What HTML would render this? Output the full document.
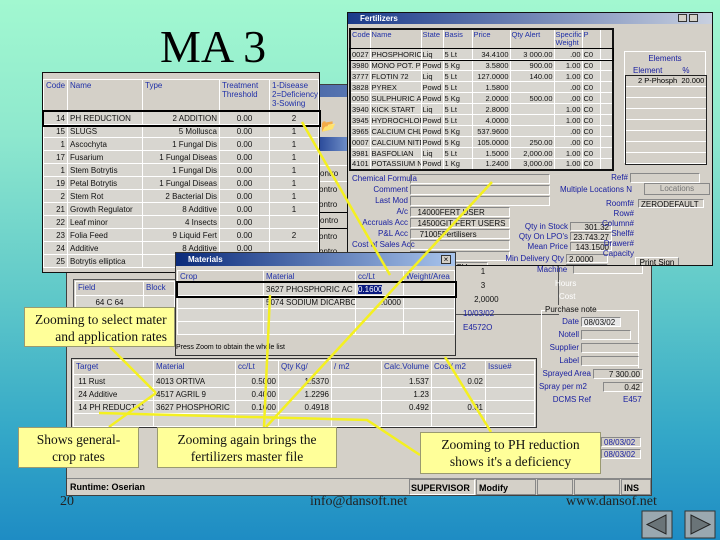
<!DOCTYPE html>
<html><head><meta charset="utf-8"><style>
*{margin:0;padding:0;box-sizing:border-box}
body{width:720px;height:540px;overflow:hidden;position:relative;font-family:"Liberation Sans",sans-serif;
background:linear-gradient(180deg,#a2f8d0 0%,#8ee8ce 25%,#5fc8c9 55%,#34a8c8 80%,#1e8cc4 100%)}
.a{position:absolute}
.win{position:absolute;background:#d4d0c8;border:1px solid #404040}
.tb{position:absolute;background:linear-gradient(90deg,#0a2a7a,#a8c4ec);color:#fff;font-size:8px;font-weight:bold;padding-left:12px;line-height:11px}
.g{position:absolute;border-collapse:collapse;font-size:8px;color:#111;table-layout:fixed}
.g td{border:1px solid #fff;background:#d8d6d0;height:13px;padding:0 2px;white-space:nowrap;overflow:hidden}
.g th{border:1px solid #fff;background:#d4d0c8;color:#2030a8;font-weight:normal;text-align:left;vertical-align:top;padding:1px 2px;font-size:8px;overflow:hidden;white-space:nowrap}
.g2 td{height:11px;line-height:9px;font-size:7.5px;padding:0 1px}
.g2 th{font-size:7.5px;line-height:8px;padding:1px}
.r{text-align:right}.c{text-align:center}
.lbl{position:absolute;color:#1a20a0;font-size:8px;text-align:right;white-space:nowrap}
.fld{position:absolute;border-bottom:1px solid #fff;border-right:1px solid #fff;border-top:1px solid #888;border-left:1px solid #888;font-size:8px;color:#111;white-space:nowrap;overflow:hidden;line-height:9px;padding:0 2px}
.co{position:absolute;background:#ffff99;border:1px solid #9a9a70;font-family:"Liberation Serif",serif;font-size:13.5px;text-align:center;line-height:17px;color:#111;padding-top:3px;overflow:hidden;white-space:nowrap}
</style></head><body>

<div class="a" style="left:160px;top:20px;font-family:'Liberation Serif',serif;font-size:46px;color:#000">MA 3</div>

<!-- main window -->
<div class="win" style="left:66px;top:84px;width:586px;height:412px">
  <div class="tb" style="left:0;top:0;width:584px;height:12px"></div>
  <div class="a" style="left:252px;top:52px;width:40px;height:14px;background:linear-gradient(90deg,#2a4a9a,#8aa8d8)"></div>
  <div class="a" style="left:252px;top:80px;width:30px;height:90px;font-size:8px;line-height:15px;color:#111">
    <div style="border:1px solid #fff">ontro</div><div>ontro</div><div>ontro</div><div style="border:1px solid #000">ontro</div><div>ontro</div><div>ontro</div>
  </div>
  <div class="a" style="left:254px;top:34px;font-size:12px">&#128194;</div>
  <div class="a" style="left:6px;top:194px;width:236px;height:64px;border:1px solid #555"></div>
  <table class="g" style="left:8px;top:196px;width:100px"><tr><th style="width:68px;height:14px">Field</th><th>Block</th></tr><tr><td class="c">64 C 64</td><td></td></tr></table>
  <div class="a" style="left:388px;top:170px;width:104px;height:60px;border:1px solid #555"></div>
  <div class="a" style="left:396px;top:180px;font-size:8px;line-height:14px;color:#111">&nbsp;&nbsp;&nbsp;&nbsp;&nbsp;&nbsp;&nbsp;&nbsp;1<br>&nbsp;&nbsp;&nbsp;&nbsp;&nbsp;&nbsp;&nbsp;&nbsp;3<br>&nbsp;&nbsp;&nbsp;&nbsp;&nbsp;2,0000<br><span style="color:#1a20a0">10/03/02<br>E4572O</span></div>
  <div class="a" style="left:4px;top:273px;width:466px;height:70px;border:1px solid #333"></div>
  <table class="g" style="left:6px;top:275px;width:462px">
    <tr><th style="width:80px;height:14px">Target</th><th style="width:82px">Material</th><th style="width:43px">cc/Lt</th><th style="width:53px">Qty Kg/</th><th style="width:50px">/ m2</th><th style="width:50px">Calc.Volume</th><th style="width:54px">Cost/ m2</th><th>Issue#</th></tr>
    <tr><td>&nbsp;11 Rust</td><td>4013 ORTIVA</td><td class="r">0.5000</td><td class="r">1.5370</td><td></td><td class="r">1.537</td><td class="r">0.02</td><td></td></tr>
    <tr><td>&nbsp;24 Additive</td><td>4517 AGRIL 9</td><td class="r">0.4000</td><td class="r">1.2296</td><td></td><td class="r">1.23</td><td></td><td></td></tr>
    <tr><td>&nbsp;14 PH REDUCT C</td><td>3627 PHOSPHORIC</td><td class="r">0.1600</td><td class="r">0.4918</td><td></td><td class="r">0.492</td><td class="r">0.01</td><td></td></tr>
    <tr><td>&nbsp;</td><td></td><td></td><td></td><td></td><td></td><td></td><td></td></tr>
  </table>
  <div class="lbl" style="left:470px;top:180px">Machine</div><div class="fld" style="left:506px;top:180px;width:70px;height:9px"></div>
  <div class="lbl" style="left:488px;top:194px;color:#fff">Hours</div>
  <div class="lbl" style="left:492px;top:207px;color:#fff">Cost</div>
  <div class="a" style="left:474px;top:225px;width:98px;height:58px;border:1px solid #fff;border-bottom:none"></div>
  <div class="a" style="left:478px;top:220px;font-size:8px;background:#d4d0c8;color:#111">Purchase note</div>
  <div class="lbl" style="left:488px;top:232px;width:24px">Date</div><div class="fld" style="left:514px;top:232px;width:40px;height:10px;background:#e8e8e8">08/03/02</div>
  <div class="lbl" style="left:478px;top:245px;width:34px">Notell</div><div class="fld" style="left:514px;top:245px;width:50px;height:10px"></div>
  <div class="lbl" style="left:478px;top:258px;width:34px">Supplier</div><div class="fld" style="left:514px;top:258px;width:58px;height:10px"></div>
  <div class="lbl" style="left:478px;top:271px;width:34px">Label</div><div class="fld" style="left:514px;top:271px;width:58px;height:10px"></div>
  <div class="lbl" style="left:470px;top:284px;width:54px">Sprayed Area</div><div class="fld" style="left:526px;top:284px;width:50px;height:10px;text-align:right">7 300.00</div>
  <div class="lbl" style="left:470px;top:297px;width:50px">Spray per m2</div><div class="fld" style="left:536px;top:297px;width:40px;height:10px;text-align:right">0.42</div>
  <div class="lbl" style="left:470px;top:310px;width:54px">DCMS Ref</div><div class="a" style="left:556px;top:310px;font-size:8px;color:#1a20a0">E457</div>
  <div class="fld" style="left:534px;top:352px;width:40px;height:10px;color:#1a20a0">08/03/02</div>
  <div class="fld" style="left:534px;top:364px;width:40px;height:10px;color:#1a20a0">08/03/02</div>
  <div class="a" style="left:0;top:393px;width:584px;height:17px;border-top:1px solid #888;font-size:9px;font-weight:bold;line-height:16px">
    <span class="a" style="left:3px">Runtime: Oserian</span>
    <span class="a" style="left:342px;width:66px;border:1px solid #888;border-right-color:#fff;border-bottom-color:#fff;height:16px;padding-left:1px">SUPERVISOR</span>
    <span class="a" style="left:409px;width:60px;border:1px solid #888;height:16px;padding-left:2px">Modify</span>
    <span class="a" style="left:470px;width:36px;border:1px solid #888;height:16px"></span>
    <span class="a" style="left:507px;width:46px;border:1px solid #888;height:16px"></span>
    <span class="a" style="left:554px;width:30px;border:1px solid #888;height:16px;padding-left:2px">INS</span>
  </div>
</div>

<!-- Types window -->
<div class="win" style="left:42px;top:72px;width:278px;height:201px;border-color:#111">
  <table class="g" style="left:0;top:6px;width:276px">
    <tr><th style="width:24px;height:32px">Code</th><th style="width:75px">Name</th><th style="width:77px">Type</th><th style="width:50px">Treatment<br>Threshold</th><th>1-Disease<br>2=Deficiency<br>3-Sowing</th></tr>
    <tr style="outline:2px solid #000"><td class="r">14</td><td>PH REDUCTION</td><td class="r">2 ADDITION</td><td class="c">0.00</td><td class="c">2</td></tr>
    <tr><td class="r">15</td><td>SLUGS</td><td class="r">5 Mollusca</td><td class="c">0.00</td><td class="c">1</td></tr>
    <tr><td class="r">1</td><td>Ascochyta</td><td class="r">1 Fungal Dis</td><td class="c">0.00</td><td class="c">1</td></tr>
    <tr><td class="r">17</td><td>Fusarium</td><td class="r">1 Fungal Diseas</td><td class="c">0.00</td><td class="c">1</td></tr>
    <tr><td class="r">1</td><td>Stem Botrytis</td><td class="r">1 Fungal Dis</td><td class="c">0.00</td><td class="c">1</td></tr>
    <tr><td class="r">19</td><td>Petal Botrytis</td><td class="r">1 Fungal Diseas</td><td class="c">0.00</td><td class="c">1</td></tr>
    <tr><td class="r">2</td><td>Stem Rot</td><td class="r">2 Bacterial Dis</td><td class="c">0.00</td><td class="c">1</td></tr>
    <tr><td class="r">21</td><td>Growth Regulator</td><td class="r">8 Additive</td><td class="c">0.00</td><td class="c">1</td></tr>
    <tr><td class="r">22</td><td>Leaf minor</td><td class="r">4 Insects</td><td class="c">0.00</td><td class="c"></td></tr>
    <tr><td class="r">23</td><td>Folia Feed</td><td class="r">9 Liquid Fert</td><td class="c">0.00</td><td class="c">2</td></tr>
    <tr><td class="r">24</td><td>Additive</td><td class="r">8 Additive</td><td class="c">0.00</td><td class="c"></td></tr>
    <tr><td class="r">25</td><td>Botrytis elliptica</td><td class="r">1 Fungal</td><td class="c">0.00</td><td class="c"></td></tr>
  </table>
</div>

<!-- Fertilizers window -->
<div class="win" style="left:347px;top:12px;width:366px;height:254px;border-color:#111;overflow:hidden">
  <div class="tb" style="left:0;top:0;width:364px;height:11px;background:linear-gradient(90deg,#1a3a8a,#c8d0e0)">Fertilizers</div>
  <div class="a" style="left:330px;top:1px;background:#d4d0c8;border:1px solid #333;width:9px;height:8px"></div>
  <div class="a" style="left:341px;top:1px;background:#d4d0c8;border:1px solid #333;width:9px;height:8px"></div>
  <table class="g g2" style="left:1px;top:15px;width:265px;border:2px solid #111">
    <tr><th style="width:20px;height:19px">Code</th><th style="width:51px">Name</th><th style="width:22px">State</th><th style="width:29px">Basis</th><th style="width:38px">Price</th><th style="width:44px">Qty Alert</th><th style="width:28px">Specific<br>Weight</th><th style="width:18px">P</th><th></th></tr>
    <tr style="outline:1px solid #000"><td>0027</td><td>PHOSPHORIC A</td><td>Liq</td><td>5 Lt</td><td class="r">34.4100</td><td class="r">3 000.00</td><td class="r">.00</td><td>C0</td><td></td></tr>
    <tr><td>3980</td><td>MONO POT. PO</td><td>Powd</td><td>5 Kg</td><td class="r">3.5800</td><td class="r">900.00</td><td class="r">1.00</td><td>C0</td><td></td></tr>
    <tr><td>3777</td><td>FLOTIN 72</td><td>Liq</td><td>5 Lt</td><td class="r">127.0000</td><td class="r">140.00</td><td class="r">1.00</td><td>C0</td><td></td></tr>
    <tr><td>3828</td><td>PYREX</td><td>Powd</td><td>5 Lt</td><td class="r">1.5800</td><td></td><td class="r">.00</td><td>C0</td><td></td></tr>
    <tr><td>0050</td><td>SULPHURIC ACI</td><td>Powd</td><td>5 Kg</td><td class="r">2.0000</td><td class="r">500.00</td><td class="r">.00</td><td>C0</td><td></td></tr>
    <tr><td>3940</td><td>KICK START</td><td>Liq</td><td>5 Lt</td><td class="r">2.8000</td><td></td><td class="r">1.00</td><td>C0</td><td></td></tr>
    <tr><td>3945</td><td>HYDROCHLORI</td><td>Powd</td><td>5 Lt</td><td class="r">4.0000</td><td></td><td class="r">1.00</td><td>C0</td><td></td></tr>
    <tr><td>3965</td><td>CALCIUM CHLO</td><td>Powd</td><td>5 Kg</td><td class="r">537.9600</td><td></td><td class="r">.00</td><td>C0</td><td></td></tr>
    <tr><td>0007</td><td>CALCIUM NITD</td><td>Powd</td><td>5 Kg</td><td class="r">105.0000</td><td class="r">250.00</td><td class="r">.00</td><td>C0</td><td></td></tr>
    <tr><td>3981</td><td>BASFOLIAN</td><td>Liq</td><td>5 Lt</td><td class="r">1.5000</td><td class="r">2,000.00</td><td class="r">1.00</td><td>C0</td><td></td></tr>
    <tr><td>4101</td><td>POTASSIUM NIT</td><td>Powd</td><td>1 Kg</td><td class="r">1.2400</td><td class="r">3,000.00</td><td class="r">1.00</td><td>C0</td><td></td></tr>
  </table>
  <div class="a" style="left:276px;top:38px;width:82px;height:112px;border:1px solid #fff">
    <div style="font-size:8px;color:#1a20a0;text-align:center;margin-top:2px">Elements</div>
  </div>
  <div class="a" style="left:285px;top:53px;font-size:8px;color:#1a20a0">Element&nbsp;&nbsp;&nbsp;&nbsp;&nbsp;&nbsp;&nbsp;&nbsp;&nbsp;%</div>
  <div class="a" style="left:277px;top:62px;width:82px;height:90px;border:1px solid #222;background:repeating-linear-gradient(180deg,#d4d0c8 0 10px,#fff 10px 11px);font-size:7.5px;white-space:nowrap;line-height:10px">
    <div style="padding-left:12px">2 P-Phosph&nbsp;&nbsp;20.000</div></div>
  <div class="lbl" style="left:4px;top:161px;width:56px">Chemical Formula</div><div class="fld" style="left:62px;top:161px;width:140px;height:10px"></div>
  <div class="lbl" style="left:4px;top:172px;width:56px">Comment</div><div class="fld" style="left:62px;top:172px;width:140px;height:10px"></div>
  <div class="lbl" style="left:4px;top:183px;width:56px">Last Mod</div><div class="fld" style="left:62px;top:183px;width:140px;height:10px"></div>
  <div class="lbl" style="left:4px;top:194px;width:56px">A/c</div><div class="fld" style="left:62px;top:194px;width:100px;height:10px">&nbsp;&nbsp;14000FERT USER</div>
  <div class="lbl" style="left:4px;top:205px;width:56px">Accruals Acc</div><div class="fld" style="left:62px;top:205px;width:100px;height:10px">&nbsp;&nbsp;14500GIT FERT USERS</div>
  <div class="lbl" style="left:4px;top:216px;width:56px">P&amp;L Acc</div><div class="fld" style="left:62px;top:216px;width:100px;height:10px">&nbsp;&nbsp;&nbsp;71005Fertilisers</div>
  <div class="lbl" style="left:4px;top:227px;width:56px">Cost of Sales Acc</div><div class="fld" style="left:62px;top:227px;width:100px;height:10px"></div>
  <div class="lbl" style="left:4px;top:238px;width:56px">Sales Income Acc</div><div class="fld" style="left:62px;top:238px;width:100px;height:10px"></div>
  <div class="lbl" style="left:4px;top:249px;width:30px">VAT</div><div class="a" style="left:36px;top:249px;font-size:8px">7000</div>
  <div class="lbl" style="left:66px;top:249px;width:30px">Currency</div><div class="fld" style="left:100px;top:249px;width:40px;height:10px">KSH</div>
  <div class="lbl" style="left:170px;top:209px;width:50px">Qty in Stock</div><div class="fld" style="left:222px;top:209px;width:42px;height:9px;text-align:right">301.32</div>
  <div class="lbl" style="left:170px;top:219px;width:50px">Qty On LPO's</div><div class="fld" style="left:222px;top:219px;width:42px;height:9px;text-align:right">23,743.27</div>
  <div class="lbl" style="left:170px;top:229px;width:50px">Mean Price</div><div class="fld" style="left:222px;top:229px;width:42px;height:9px;text-align:right">143.1500</div>
  <div class="lbl" style="left:140px;top:241px;width:76px">Min Delivery Qty</div><div class="fld" style="left:218px;top:241px;width:42px;height:9px">2.0000</div>
  <div class="lbl" style="left:140px;top:251px;width:76px">Reorder Level</div><div class="fld" style="left:218px;top:251px;width:42px;height:9px">2.0000</div>
  <div class="lbl" style="left:220px;top:160px;width:60px">Ref#</div><div class="fld" style="left:282px;top:160px;width:70px;height:10px"></div>
  <div class="lbl" style="left:170px;top:172px;width:114px">Multiple Locations N</div>
  <div class="a" style="left:296px;top:170px;width:66px;height:12px;border:1px solid #888;font-size:8px;color:#777;text-align:center;line-height:10px">Locations</div>
  <div class="lbl" style="left:246px;top:186px;width:40px">Roomf#</div><div class="fld" style="left:290px;top:186px;width:66px;height:9px">ZERODEFAULT</div>
  <div class="lbl" style="left:246px;top:196px;width:40px">Row#</div>
  <div class="lbl" style="left:246px;top:206px;width:40px">Column#</div>
  <div class="lbl" style="left:246px;top:216px;width:40px">Shelf#</div>
  <div class="lbl" style="left:246px;top:226px;width:40px">Drawer#</div>
  <div class="lbl" style="left:246px;top:236px;width:40px">Capacity</div>
  <div class="a" style="left:287px;top:244px;width:44px;height:12px;border:1px solid #888;border-top-color:#fff;border-left-color:#fff;font-size:8px;text-align:center;line-height:10px">Print Sign</div>
</div>

<!-- Materials dialog -->
<div class="win" style="left:175px;top:252px;width:281px;height:104px;border-color:#333">
  <div class="tb" style="left:0;top:0;width:279px;height:13px;line-height:13px;background:linear-gradient(90deg,#0a2a7a,#a8c4ec)">Materials</div>
  <div class="a" style="left:265px;top:2px;width:10px;height:9px;background:#d4d0c8;border:1px solid #333;font-size:8px;line-height:7px;text-align:center">×</div>
  <table class="g" style="left:1px;top:17px;width:278px">
    <tr><th style="width:86px;height:11px">Crop</th><th style="width:92px">Material</th><th style="width:48px">cc/Lt</th><th>Weight/Area</th></tr>
    <tr style="outline:2px solid #000"><td></td><td>3627 PHOSPHORIC AC</td><td><span style="background:#0a1a80;color:#fff">0.1600</span></td><td></td></tr>
    <tr><td></td><td>5074 SODIUM DICARBO</td><td class="r">.0000</td><td></td></tr>
    <tr><td></td><td></td><td></td><td></td></tr>
    <tr><td></td><td></td><td></td><td></td></tr>
  </table>
  <div class="a" style="left:0;top:91px;font-size:7px">Press Zoom to obtain the whole list</div>
</div>

<svg class="a" style="left:0;top:0" width="720" height="540">
<g stroke="#f4f020" stroke-width="2.5" fill="none">
<line x1="302" y1="122" x2="390" y2="275"/>
<line x1="492" y1="182" x2="266" y2="427"/>
<line x1="270" y1="295" x2="264" y2="427"/>
<line x1="110" y1="347" x2="156" y2="393"/>
<line x1="156" y1="393" x2="109" y2="427"/>
<polyline points="420,455 367,420 99,413"/>
<line x1="445" y1="357" x2="491" y2="432"/>
</g></svg>

<div class="co" style="left:24px;top:307px;width:151px;height:40px;text-align:left;padding-left:10px">Zooming to select mater<br>&nbsp;&nbsp;&nbsp;&nbsp;&nbsp;&nbsp;and application rates</div>
<div class="co" style="left:18px;top:427px;width:121px;height:41px">Shows general-<br>crop rates</div>
<div class="co" style="left:157px;top:427px;width:180px;height:41px">Zooming again brings the<br>fertilizers master file</div>
<div class="co" style="left:420px;top:432px;width:181px;height:42px">Zooming to PH reduction<br>shows it's a deficiency</div>

<div class="a" style="left:60px;top:494px;font-family:'Liberation Serif',serif;font-size:14px;color:#222">20</div>
<div class="a" style="left:310px;top:494px;font-family:'Liberation Serif',serif;font-size:14px;color:#222">info@dansoft.net</div>
<div class="a" style="left:566px;top:494px;font-family:'Liberation Serif',serif;font-size:14px;color:#222">www.dansof.net</div>
<svg class="a" style="left:641px;top:510px" width="78" height="30">
<rect x="1" y="1" width="30" height="27" fill="#9aa8b0" stroke="#333"/>
<polygon points="25,5 25,24 6,14.5" fill="#6a7478" stroke="#222"/>
<rect x="44" y="1" width="30" height="27" fill="#9aa8b0" stroke="#333"/>
<polygon points="50,5 50,24 69,14.5" fill="#6a7478" stroke="#222"/>
</svg>
</body></html>
